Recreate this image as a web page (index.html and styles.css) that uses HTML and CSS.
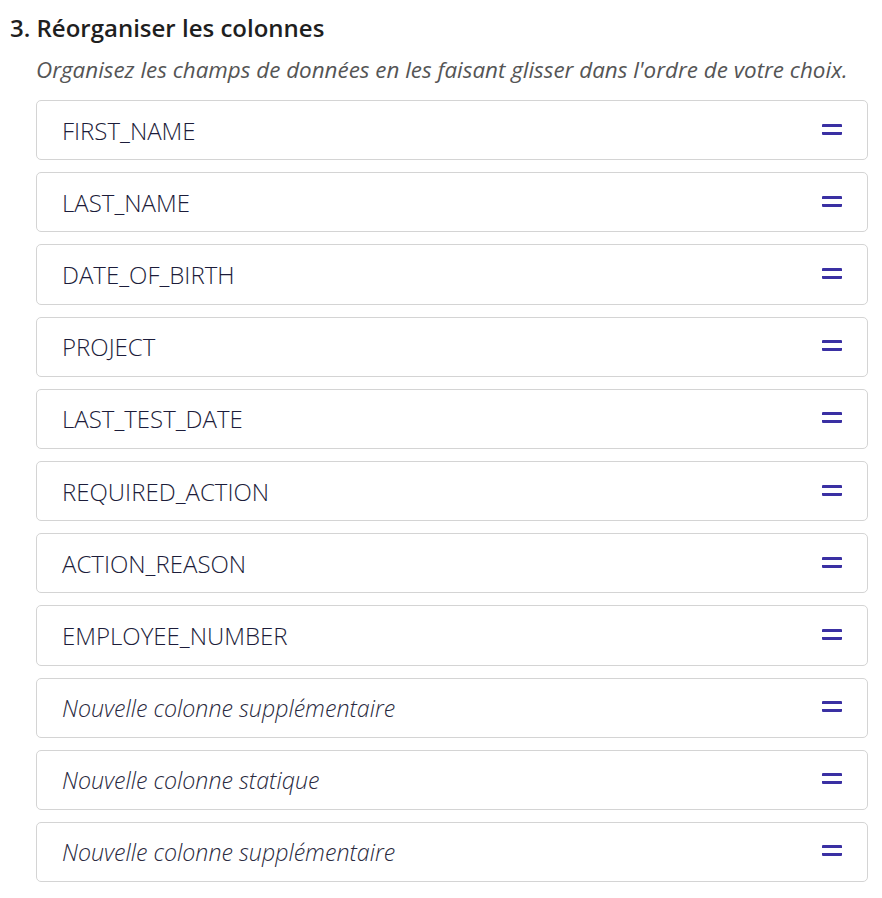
FILE: index.html
```html
<!DOCTYPE html>
<html lang="fr">
<head>
  <meta charset="UTF-8">
  <title>Réorganiser les colonnes</title>
  <link rel="stylesheet" href="styles.css">
</head>
<body>
  <section class="step">
    <h2>3. Réorganiser les colonnes</h2>
    <div class="step-body">
      <p class="hint">Organisez les champs de données en les faisant glisser dans l'ordre de votre choix.</p>
      <ul class="columns">
        <li class="column"><span>FIRST_NAME</span><span class="handle"></span></li>
        <li class="column"><span>LAST_NAME</span><span class="handle"></span></li>
        <li class="column"><span>DATE_OF_BIRTH</span><span class="handle"></span></li>
        <li class="column"><span>PROJECT</span><span class="handle"></span></li>
        <li class="column"><span>LAST_TEST_DATE</span><span class="handle"></span></li>
        <li class="column"><span>REQUIRED_ACTION</span><span class="handle"></span></li>
        <li class="column"><span>ACTION_REASON</span><span class="handle"></span></li>
        <li class="column"><span>EMPLOYEE_NUMBER</span><span class="handle"></span></li>
        <li class="column new"><span>Nouvelle colonne supplémentaire</span><span class="handle"></span></li>
        <li class="column new"><span>Nouvelle colonne statique</span><span class="handle"></span></li>
        <li class="column new"><span>Nouvelle colonne supplémentaire</span><span class="handle"></span></li>
      </ul>
    </div>
  </section>
</body>
</html>
```

FILE: styles.css
```css
* {
  margin: 0;
  padding: 0;
  box-sizing: border-box;
}

body {
  font-family: 'Open Sans', sans-serif;
  background: #fff;
  color: #222;
}

.step {
  padding: 11px 14px 0 10px;
}

.step h2 {
  font-size: 24px;
  font-weight: 600;
  line-height: 34px;
  color: #1f1f1f;
}

.step-body {
  padding-left: 26px;
}

.hint {
  font-style: italic;
  font-size: 22.4px;
  line-height: 30px;
  color: #555;
  margin: 10px 0 15px;
}

.columns {
  list-style: none;
  display: flex;
  flex-direction: column;
  gap: 12px;
}

.column {
  display: flex;
  align-items: center;
  justify-content: space-between;
  height: 60.2px;
  padding: 0 25px;
  border: 1px solid #d4d4d4;
  border-radius: 5px;
  font-size: 24px;
  font-weight: 300;
  color: #1c1c3a;
}

.column.new {
  font-style: italic;
  font-size: 23.2px;
  color: #2a2a40;
}

.handle {
  width: 20px;
  height: 11px;
  border-top: 3px solid #3a30a3;
  border-bottom: 3px solid #3a30a3;
  border-radius: 1px;
  margin-top: -2px;
}
```
